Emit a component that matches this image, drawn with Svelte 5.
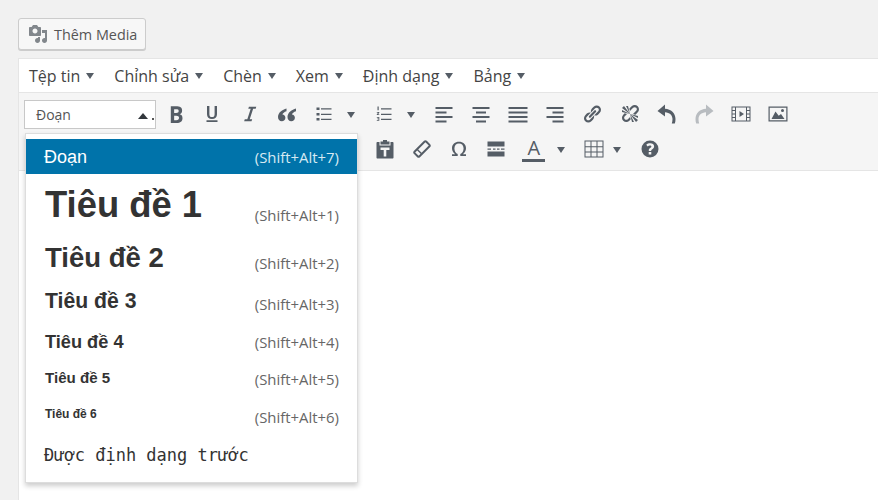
<script>
  const menus = ["Tệp tin", "Chỉnh sửa", "Chèn", "Xem", "Định dạng", "Bảng"];

  const formats = [
    { label: "Đoạn", cls: "p", key: "(Shift+Alt+7)" },
    { label: "Tiêu đề 1", cls: "h1", key: "(Shift+Alt+1)" },
    { label: "Tiêu đề 2", cls: "h2", key: "(Shift+Alt+2)" },
    { label: "Tiêu đề 3", cls: "h3", key: "(Shift+Alt+3)" },
    { label: "Tiêu đề 4", cls: "h4", key: "(Shift+Alt+4)" },
    { label: "Tiêu đề 5", cls: "h5", key: "(Shift+Alt+5)" },
    { label: "Tiêu đề 6", cls: "h6", key: "(Shift+Alt+6)" },
    { label: "Được định dạng trước", cls: "pre", key: "" }
  ];

  const icons = {
    bold: "M6 4v13h4.54c1.37 0 2.46-.33 3.26-1 .8-.66 1.2-1.58 1.2-2.77 0-.84-.17-1.51-.51-2.01s-.9-.85-1.67-1.03v-.09c.57-.1 1.02-.4 1.36-.9s.51-1.13.51-1.91c0-1.14-.39-1.98-1.17-2.5C12.75 4.26 11.5 4 9.78 4H6zm2.57 5.15V6.26h1.36c.73 0 1.27.11 1.61.32.34.22.51.58.51 1.07 0 .54-.16.92-.47 1.15s-.82.35-1.51.35h-1.5zm0 2.19h1.6c1.44 0 2.16.53 2.16 1.61 0 .6-.17 1.05-.51 1.34s-.86.45-1.57.45H8.57v-3.4z",
    underline: "M5 2h2.400v8.200c0 1.900.9 2.900 2.600 2.900s2.600-1 2.600-2.900V2H15v8.300c0 3.100-1.800 4.700-5 4.700s-5-1.600-5-4.700zM4.500 16.200h11V18h-11z",
    italic: "M17 2l-.7 2.200h-2.800L9.700 15.800h2.700l-.7 2.200H3.500l.7-2.200h2.800l3.800-11.600H8.100L8.800 2z",
    quote: "M9.500 4.500C5.500 5.600 1 8.500 1 13c0 2.500 1.500 4.200 3.800 4.200 2 0 3.600-1.400 3.600-3.400 0-1.900-1.300-3.200-3-3.300.4-1.400 1.900-2.600 4.100-3.300zM19 4.500c-4 1.100-8.500 4-8.500 8.500 0 2.500 1.500 4.200 3.800 4.200 2 0 3.600-1.400 3.600-3.400 0-1.900-1.300-3.200-3-3.300.4-1.400 1.900-2.600 4.100-3.300z",
    ul: "M2.500 3.500h3V6h-3zM2.500 9h3v2.500h-3zM2.500 14h3v2.500h-3zM7 4.200h10.500v1.200H7zM7 9.700h10.500v1.200H7zM7 14.700h10.500v1.200H7z",
    ol: "M7 4.200h10.500v1.200H7zM7 9.700h10.500v1.200H7zM7 14.700h10.500v1.200H7zM3.500 2.500h1.200v3.800H3.500zM2.800 8h2.500v.8L4 10.300h1.300v.7H2.800v-.7l1.400-1.600H2.800zM2.800 13h2.500v3.800H2.800v-.7h1.700v-.9H3.300v-.6h1.200v-.9H2.800z",
    left: "M1.500 3h17v2h-17zM1.500 7.500h11v2h-11zM1.500 12h17v2h-17zM1.500 16.500h11v2h-11z",
    center: "M1.500 3h17v2h-17zM5 7.500h10v2H5zM1.500 12h17v2h-17zM5 16.500h10v2H5z",
    justify: "M.5 3h19v2H.5zM.5 7.500h19v2H.5zM.5 12h19v2H.5zM.5 16.500h19v2H.5z",
    right: "M1.500 3h17v2h-17zM7.500 7.500h11v2h-11zM1.500 12h17v2h-17zM7.500 16.500h11v2h-11z",
    link: "M17.740 2.760c1.680 1.690 1.680 4.410 0 6.100l-1.530 1.520c-1.120 1.120-2.700 1.470-4.140 1.090l2.620-2.610.76-.77.76-.76c.84-.84.84-2.200 0-3.040-.84-.85-2.200-.85-3.040 0l-.77.76-3.380 3.380c-.37-1.440-.02-3.020 1.100-4.140l1.520-1.530c1.690-1.680 4.420-1.680 6.100 0zM8.590 13.430l5.340-5.340c.42-.42.42-1.100 0-1.520-.44-.43-1.130-.39-1.530 0l-5.330 5.340c-.42.42-.42 1.100 0 1.520.44.43 1.130.39 1.520 0zm-.76 2.290l4.140-4.150c.38 1.440.03 3.020-1.090 4.140l-1.520 1.530c-1.690 1.680-4.410 1.680-6.100 0-1.680-1.680-1.680-4.420 0-6.100l1.530-1.520c1.120-1.120 2.700-1.470 4.140-1.100l-4.140 4.150c-.85.84-.85 2.200 0 3.050.84.840 2.200.840 3.040 0z",
    unlink: "M17.740 2.260c1.680 1.690 1.680 4.410 0 6.100l-1.530 1.520c-.32.33-.69.58-1.080.77L13 10l1.690-1.640.76-.77.76-.76c.84-.84.84-2.200 0-3.040-.84-.85-2.200-.85-3.040 0l-.77.76-.76.76L10 7l-.65-2.140c.19-.38.44-.75.77-1.070l1.520-1.530c1.690-1.680 4.420-1.680 6.100 0zM2 4l8 6-6-8zm4-2l4 8-2-8H6zM2 6l8 4-8-2V6zm7.360 7.690L10 13l.74 2.350-1.380 1.390c-1.690 1.680-4.410 1.680-6.100 0-1.680-1.680-1.680-4.420 0-6.100l1.390-1.380L7 10l-.69.64-1.520 1.530c-.85.84-.85 2.200 0 3.040.84.85 2.200.85 3.040 0zM18 16l-8-6 6 8zm-4 2l-4-8 2 8h2zm4-4l-8-4 8 2v2z",
    undo: "M.5 7L8 .5v4.200c6 .3 10.500 4.500 10.500 10.300 0 1.700-.2 3.200-.7 4.500h-3c.5-1.500.7-3 .7-4.500 0-3.700-2.800-6.500-7.500-6.800v4.300z",
    redo: "M19.500 7L12 .5v4.200C6 5 1.500 9.200 1.500 15c0 1.700.2 3.200.7 4.500h3c-.5-1.500-.7-3-.7-4.500 0-3.700 2.800-6.500 7.500-6.800v4.300z",
    video: "M.5 2.500h19v15H.5zM1.500 3.500v2.500h2.500V3.500zm0 3.500v2.500h2.500V7zm0 3.500V13h2.500v-2.500zm0 3.500v2.500h2.500V14zM5 3.500v13h10v-13zM16 3.500v2.500h2.500V3.500zm0 3.500v2.500h2.500V7zm0 3.500V13h2.500v-2.500zm0 3.500v2.500h2.500V14zM8.500 7l4.500 3-4.500 3z",
    image: "M.5 2.500h19v15H.5zM1.700 3.700v12.600h16.600V3.700zM3.500 15l4-7.500 3.200 4.300 2.300-1.800 3.500 5zM14.500 5a1.500 1.500 0 1 1 0 3 1.500 1.500 0 0 1 0-3z",
    paste: "M8 1h4v1.500h2.500v3h-9v-3H8zM2.500 3H4.500v3.500h11V3h2c.6 0 1 .4 1 1v14.500c0 .6-.4 1-1 1h-15c-.6 0-1-.4-1-1V4c0-.6.4-1 1-1zM5.500 8.500v2.400h3.200V17.500h2.600v-6.600h3.200V8.500z",
    eraser: "M12 1.800c.8-.8 2-.8 2.800 0l3.400 3.400c.8.8.8 2 0 2.800L8 18.200c-.8.8-2 .8-2.800 0l-3.400-3.400c-.8-.8-.8-2 0-2.800zM13.400 3.200L6.200 10.400l3.400 3.400 7.200-7.200zM5.200 11.400L3.200 13.400l3.400 3.400 2-2z",
    omega: "M3 17v-1.800h3.200C4.200 13.700 3 11.700 3 9.300 3 5.300 6 2.800 10 2.800s7 2.500 7 6.500c0 2.400-1.200 4.400-3.200 5.900H17V17h-5.700v-1.900c2-1 3.300-3 3.300-5.600 0-2.900-1.800-4.900-4.600-4.900S5.400 6.600 5.400 9.500c0 2.600 1.300 4.600 3.300 5.600V17z",
    more: "M1.500 2.500h17v5h-17zM1.500 12.500h17v5h-17zM1.500 9.400h3.500v1.300H1.500zM7 9.400h2.500v1.300H7zM11 9.400h2.500v1.300H11zM15 9.400h3.500v1.300H15z",
    table: "M.5 1.500h19v17H.5zM1.500 2.500v4.700h5V2.500zm6 0v4.700h5V2.500zm6 0v4.700h5V2.500zM1.500 8.200v4.300h5V8.200zm6 0v4.300h5V8.200zm6 0v4.300h5V8.200zM1.500 13.500v4h5v-4zm6 0v4h5v-4zm6 0v4h5v-4z",
    help: "M10 1.500a8.500 8.500 0 1 0 0 17 8.500 8.500 0 0 0 0-17zm1.300 14h-2.600v-2.400h2.600zm2.500-6.800c-.4.700-1.200 1.300-1.800 1.700-.6.400-.8.700-.8 1.300v.300H8.800v-.600c0-1 .4-1.700 1.300-2.300.7-.5 1.300-.9 1.300-1.600 0-.7-.6-1.100-1.400-1.100-.9 0-1.700.4-2.400 1L6.300 5.700C7.300 4.800 8.600 4.300 10.200 4.300c2.300 0 3.900 1.200 3.900 3 0 .5-.1 1-.3 1.400z"
  };

  const row1 = [
    { i: "bold", size: 26 }, { i: "underline", cls: "nudge-l" }, { i: "italic", size: 18 }, { i: "quote" },
    { i: "ul", caret: true }, { i: "ol", caret: true },
    { i: "left" }, { i: "center" }, { i: "justify" }, { i: "right" },
    { i: "link" }, { i: "unlink" }, { i: "undo" }, { i: "redo", off: true },
    { i: "video" }, { i: "image" }
  ];
</script>

<div class="page">
  <button class="media-btn">
    <svg viewBox="0 0 20 20" width="20" height="20"><path d="M13 11V4c0-.55-.45-1-1-1h-1.670L9 1H5L3.670 3H2c-.55 0-1 .45-1 1v7c0 .55.45 1 1 1h10c.55 0 1-.45 1-1zM7 4.500c1.380 0 2.500 1.120 2.500 2.500S8.380 9.500 7 9.500 4.500 8.380 4.500 7 5.620 4.500 7 4.500zM14 6h5v10.500c0 1.380-1.120 2.500-2.500 2.500S14 17.880 14 16.500s1.120-2.500 2.500-2.500c.17 0 .34.02.5.05V9h-3V6zm-4 8.050V13h2v3.500c0 1.380-1.120 2.500-2.500 2.500S7 17.880 7 16.500 8.120 14 9.500 14c.17 0 .34.02.5.05z"/></svg>
    Thêm Media
  </button>

  <div class="editor">
    <div class="menubar">
      {#each menus as m}
        <span class="menu-item">{m}<i class="caret"></i></span>
      {/each}
    </div>

    <div class="toolbar">
      <div class="row">
        <div class="select">
          <span>Đoạn</span>
          <i class="caret-up"></i>
          <i class="dot"></i>
        </div>
        {#each row1 as b}
          <span class="btn {b.cls ?? ''}" class:off={b.off}>
            <svg viewBox="0 0 20 20" width={b.size ?? 20} height={b.size ?? 20}><path fill-rule="evenodd" d={icons[b.i]}/></svg>
          </span>
          {#if b.caret}<span class="split"><i class="caret"></i></span>{/if}
        {/each}
      </div>
      <div class="row second">
        <span class="btn"><svg viewBox="0 0 20 20" width="20" height="20"><path fill-rule="evenodd" d={icons.paste}/></svg></span>
        <span class="btn"><svg viewBox="0 0 20 20" width="20" height="20"><path fill-rule="evenodd" d={icons.eraser}/></svg></span>
        <span class="btn"><svg viewBox="0 0 20 20" width="20" height="20"><path fill-rule="evenodd" d={icons.omega}/></svg></span>
        <span class="btn"><svg viewBox="0 0 20 20" width="20" height="20"><path fill-rule="evenodd" d={icons.more}/></svg></span>
        <span class="btn color-a">
          <span class="a-letter">A</span>
        </span>
        <span class="split after-a"><i class="caret"></i></span>
        <span class="btn table"><svg viewBox="0 0 20 20" width="20" height="20"><path fill-rule="evenodd" d={icons.table}/></svg></span>
        <span class="split after-table"><i class="caret"></i></span>
        <span class="btn help"><svg viewBox="0 0 20 20" width="20" height="20"><path fill-rule="evenodd" d={icons.help}/></svg></span>
      </div>
    </div>

    <div class="dropdown">
      {#each formats as f, n}
        <div class="item {f.cls}" class:active={n === 0}>
          <span class="label">{f.label}</span>
          {#if f.key}<span class="key">{f.key}</span>{/if}
        </div>
      {/each}
    </div>
  </div>
</div>

<style>
  :global(body) {
    background: #f1f1f1;
  }

  .page {
    height: 500px;
    box-sizing: border-box;
    padding: 18px 0 0 18px;
    overflow: hidden;
    font-family: "Open Sans", sans-serif;
    color: #333;
  }

  .media-btn {
    display: flex;
    align-items: center;
    gap: 6px;
    width: 128px;
    height: 32px;
    padding: 0 0 0 9px;
    box-sizing: border-box;
    background: #f7f7f7;
    border: 1px solid #ccc;
    border-radius: 3px;
    box-shadow: 0 1px 0 #ccc;
    font: 14.4px "Open Sans", sans-serif;
    color: #555;
  }

  .media-btn svg {
    fill: #82878c;
    flex: none;
  }

  .editor {
    position: relative;
    margin-top: 8px;
    height: 460px;
    box-sizing: border-box;
    border: 1px solid #e5e5e5;
    border-right: 0;
    background: #fff;
  }

  .menubar {
    display: flex;
    align-items: center;
    gap: 20px;
    height: 33px;
    padding: 0 0 0 10px;
    border-bottom: 1px solid #e5e5e5;
    font-size: 16px;
    color: #444;
  }

  .menu-item {
    display: flex;
    align-items: center;
    gap: 6px;
  }

  .caret {
    display: block;
    width: 0;
    height: 0;
    border-left: 4.5px solid transparent;
    border-right: 4.5px solid transparent;
    border-top: 6px solid #555d66;
  }

  .toolbar {
    height: 78px;
    box-sizing: border-box;
    padding: 7px 0 0 5px;
    background: #f5f5f5;
    border-bottom: 1px solid #e5e5e5;
  }

  .row {
    display: flex;
    align-items: center;
    height: 29px;
  }

  .row.second {
    margin-top: 6px;
    padding-left: 342px;
  }

  .select {
    position: relative;
    flex: none;
    width: 132px;
    height: 29px;
    box-sizing: border-box;
    margin-right: 1px;
    padding-left: 11px;
    line-height: 27px;
    background: #fff;
    border: 1px solid #c8c8c8;
    font-size: 14px;
    color: #555;
  }

  .caret-up {
    position: absolute;
    right: 7px;
    top: 12px;
    width: 0;
    height: 0;
    border-left: 5px solid transparent;
    border-right: 5px solid transparent;
    border-bottom: 6px solid #32373c;
  }

  .dot {
    position: absolute;
    right: 1px;
    top: 17px;
    width: 2px;
    height: 2px;
    background: #555;
  }

  .btn {
    display: flex;
    align-items: center;
    justify-content: center;
    flex: none;
    width: 37.2px;
    height: 29px;
  }

  .btn svg {
    fill: #555d66;
    margin-bottom: 2px;
    flex: none;
  }

  .btn.off svg {
    fill: #b8bcc0;
  }

  .nudge-l svg {
    margin-right: 2px;
  }

  .split {
    display: flex;
    align-items: center;
    justify-content: center;
    flex: none;
    width: 16px;
    margin-right: 6.5px;
  }

  .split.after-a {
    margin: 0 0 0 5px;
  }

  .split.after-table {
    margin: 0;
  }

  .btn.color-a {
    width: 28px;
    margin-left: 5px;
  }

  .btn.table {
    width: 30px;
    margin-left: 10px;
  }

  .btn.help {
    width: 34px;
    margin-left: 8px;
  }

  .a-letter {
    display: block;
    width: 23px;
    margin-bottom: 1px;
    border-bottom: 3px solid #555d66;
    font-size: 20px;
    line-height: 22px;
    text-align: center;
    color: #555d66;
  }

  .dropdown {
    position: absolute;
    left: 6px;
    top: 74px;
    width: 333px;
    height: 350px;
    box-sizing: border-box;
    padding-top: 5px;
    background: #fff;
    border: 1px solid #ddd;
    box-shadow: 0 3px 5px rgba(0, 0, 0, 0.2);
  }

  .item {
    display: flex;
    justify-content: space-between;
    align-items: flex-end;
    box-sizing: border-box;
    padding: 0 18px 0 18px;
    font-family: "Liberation Sans", Arial, sans-serif;
    font-weight: 700;
    color: #333;
  }

  .key {
    font-family: "Open Sans", sans-serif;
    font-weight: 400;
    font-size: 14.9px;
    line-height: 24px;
    color: #666;
  }

  .item.active {
    background: #0073aa;
    color: #fff;
  }

  .item.active .key {
    color: #d7eaf3;
  }

  .p {
    height: 35px;
    align-items: center;
    font-weight: 400;
    font-size: 18px;
  }

  .p .label {
    margin-top: 2px;
  }

  .h1 { height: 53px; font-size: 36.4px; }
  .h2 { height: 48px; font-size: 27.5px; }
  .h3 { height: 41px; font-size: 21.2px; }
  .h4 { height: 38px; font-size: 18.2px; }
  .h5 { height: 37px; font-size: 15.1px; }
  .h6 { height: 38px; font-size: 12px; }

  .h1 .label { line-height: 42px; margin: 0 0 1px 1px; }
  .h2 .label { line-height: 32px; margin: 0 0 1px 1px; }
  .h3 .label { line-height: 26px; margin: 0 0 2px 1px; }
  .h4 .label { line-height: 22px; margin: 0 0 1px 1px; }
  .h5 .label { line-height: 18px; margin: 0 0 4px 1px; }
  .h6 .label { line-height: 14px; margin: 0 0 8px 1px; }

  .pre {
    height: 47px;
    padding-top: 4px;
    align-items: center;
    font-family: "DejaVu Sans Mono", monospace;
    font-weight: 400;
    font-size: 17px;
  }
</style>
